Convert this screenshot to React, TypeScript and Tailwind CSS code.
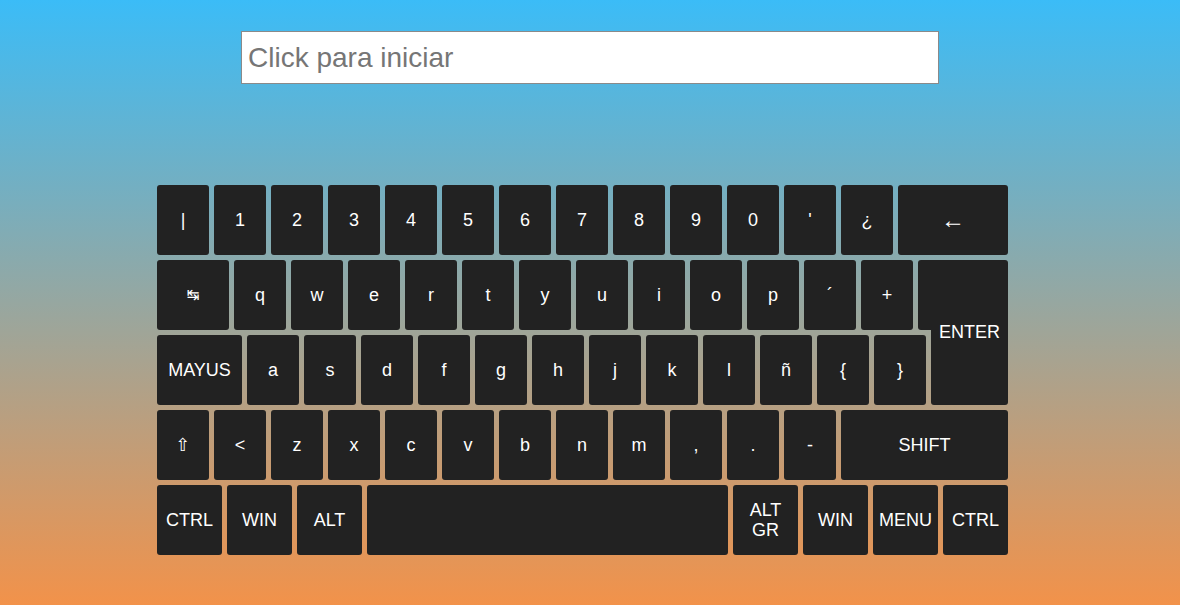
import type { ReactNode } from "react";

const row1 = ["|", "1", "2", "3", "4", "5", "6", "7", "8", "9", "0", "'", "¿"];
const row2 = ["q", "w", "e", "r", "t", "y", "u", "i", "o", "p", "´", "+"];
const row3 = ["a", "s", "d", "f", "g", "h", "j", "k", "l", "ñ", "{", "}"];
const row4 = ["<", "z", "x", "c", "v", "b", "n", "m", ",", ".", "-"];

function Key({ w = "w-[52px]", children }: { w?: string; children?: ReactNode }) {
  return (
    <div
      className={`${w} flex h-[70px] shrink-0 items-center justify-center rounded-[3px] bg-[#222222] text-center text-[18px] leading-[20px] text-white`}
    >
      {children}
    </div>
  );
}

export default function App() {
  return (
    <div
      className="min-h-[605px] w-full bg-[linear-gradient(to_bottom,#3bbcf7,#f2924a)] pt-[31px]"
      style={{ fontFamily: '"Liberation Sans", Arial, sans-serif' }}
    >
      <div className="mx-auto w-[698px]">
        <input
          type="text"
          placeholder="Click para iniciar"
          className="h-[53px] w-full border border-[#8a8a8a] bg-white px-[6px] text-[28px] text-[#222] outline-none placeholder:text-[#767676]"
        />
      </div>

      {/* keyboard */}
      <div className="mx-auto mt-[101px] flex w-[866px] flex-col gap-[5px]">
        <div className="flex gap-[5px]">
          {row1.map((k) => (
            <Key key={k}>{k}</Key>
          ))}
          <Key w="w-[110px]">
            <span className="text-[24px] font-light">←</span>
          </Key>
        </div>

        <div className="flex gap-[5px]">
          <div className="flex flex-col gap-[5px]">
            <div className="flex gap-[5px]">
              <Key w="w-[72px]">
                <span className="text-[15px]" style={{ fontFamily: '"DejaVu Sans", sans-serif' }}>
                  ↹
                </span>
              </Key>
              {row2.map((k) => (
                <Key key={k}>{k}</Key>
              ))}
            </div>
            <div className="flex gap-[5px]">
              <Key w="w-[85px]">MAYUS</Key>
              {row3.map((k) => (
                <Key key={k}>{k}</Key>
              ))}
            </div>
          </div>
          {/* enter spans two rows, with the upper lip reaching left */}
          <div className="relative flex h-[145px] w-[77px] items-center justify-center rounded-[3px] rounded-tl-none bg-[#222222] text-[18px] text-white">
            <div className="absolute top-0 left-[-13px] h-[70px] w-[14px] rounded-tl-[3px] rounded-bl-[3px] bg-[#222222]" />
            <span className="relative">ENTER</span>
          </div>
        </div>

        <div className="flex gap-[5px]">
          <Key>
            <span style={{ fontFamily: '"DejaVu Sans", sans-serif' }}>⇧</span>
          </Key>
          {row4.map((k) => (
            <Key key={k}>{k}</Key>
          ))}
          <Key w="w-[167px]">SHIFT</Key>
        </div>

        <div className="flex gap-[5px]">
          <Key w="w-[65px]">CTRL</Key>
          <Key w="w-[65px]">WIN</Key>
          <Key w="w-[65px]">ALT</Key>
          <Key w="w-[361px]" />
          <Key w="w-[65px]">
            ALT
            <br />
            GR
          </Key>
          <Key w="w-[65px]">WIN</Key>
          <Key w="w-[65px]">MENU</Key>
          <Key w="w-[65px]">CTRL</Key>
        </div>
      </div>
    </div>
  );
}
